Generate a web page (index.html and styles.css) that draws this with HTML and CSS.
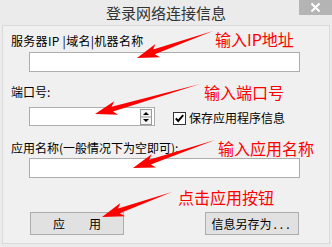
FILE: index.html
```html
<!DOCTYPE html>
<html>
<head>
<meta charset="utf-8">
<link rel="stylesheet" href="styles.css">
</head>
<body>
<div class="window">
  <div class="titlebar">
    <div class="title">登录网络连接信息</div>
    <div class="close">
      <svg width="11" height="11" viewBox="0 0 11 11"><path d="M1.5 1.5 L9.5 9.5 M9.5 1.5 L1.5 9.5" stroke="#fff" stroke-width="2" fill="none"/></svg>
    </div>
  </div>
  <div class="panel">
    <div class="label first">服务器IP |域名|机器名称</div>
    <div class="field wide after-label"></div>
    <div class="label second">端口号:</div>
    <div class="port-row">
      <div class="field port">
        <svg class="spin" width="12" height="16" viewBox="0 0 12 16">
          <rect x="0.5" y="0.5" width="11" height="15" fill="#f4f4f4" stroke="#9a9a9a"/>
          <line x1="1" y1="8" x2="11" y2="8" stroke="#9a9a9a"/>
          <path d="M3 6 L6 3 L9 6 Z" fill="#000"/>
          <path d="M3 10 L6 13 L9 10 Z" fill="#000"/>
        </svg>
      </div>
      <div class="check">
        <svg class="box" width="13" height="13" viewBox="0 0 13 13">
          <rect x="0.5" y="0.5" width="12" height="12" fill="#fff" stroke="#333"/>
          <path d="M2.8 6.4 L5.2 9 L10.2 3.2" stroke="#000" stroke-width="2" fill="none"/>
        </svg>
        <span>保存应用程序信息</span>
      </div>
    </div>
    <div class="label third">应用名称(一般情况下为空即可):</div>
    <div class="field wide after-label3"></div>
    <div class="buttons">
      <div class="btn">应　　用</div>
      <div class="btn">信息另存为<span class="dots">...</span></div>
    </div>
  </div>

  <div class="notes">
    <span class="note n1">输入IP地址</span>
    <span class="note n2">输入端口号</span>
    <span class="note n3">输入应用名称</span>
    <span class="note n4">点击应用按钮</span>
    <svg class="arrows" width="332" height="247" viewBox="0 0 332 247">
      <polygon points="213,31 153.1,49.6 155.4,44.0 137,58 160.0,57.2 154.8,54.3" fill="#f00"/>
      <polygon points="200,84 111.6,106.7 114.2,101.2 95,114 118.1,114.7 113.0,111.5" fill="#f00"/>
      <polygon points="215,140 149.2,159.8 151.6,154.3 133,168 156.1,167.5 150.8,164.6" fill="#f00"/>
      <polygon points="172,192 118.1,208.6 120.4,203.0 102,217 125.1,216.2 119.8,213.3" fill="#f00"/>
    </svg>
  </div>
</div>
</body>
</html>
```

FILE: styles.css
```css
* { box-sizing: border-box; }
html, body { margin: 0; padding: 0; }
body {
  width: 332px;
  height: 247px;
  background: #f0f0f0;
  font-family: "Noto Sans CJK SC", "Liberation Sans", sans-serif;
  color: #000;
  overflow: hidden;
}
.window {
  position: relative;
  width: 332px;
  height: 247px;
  background: #ebebeb;
}
.titlebar {
  height: 25px;
  display: grid;
  grid-template-columns: 33px 1fr 33px;
  align-items: start;
}
.title {
  grid-column: 2;
  text-align: center;
  font-size: 15px;
  line-height: 25px;
  color: #333;
}
.close {
  grid-column: 3;
  height: 15px;
  background: #b4b4b4;
  display: flex;
  align-items: center;
  justify-content: center;
}
.panel {
  margin: 0 2px;
  height: 219px;
  border: 1px solid #dadada;
  background: #f0f0f0;
  display: flex;
  flex-direction: column;
  align-items: flex-start;
}
.label {
  font-size: 12px;
  line-height: 16px;
  height: 16px;
  padding-left: 8px;
  white-space: nowrap;
}
.label.first { margin-top: 7px; letter-spacing: 0.3px; }
.label.second { margin-top: 12px; }
.label.third { margin-top: 14px; }
.field {
  background: #fff;
  border: 1px solid #adadad;
  margin-left: 26px;
}
.field.wide { width: 271px; height: 20px; }
.after-label { margin-top: 3px; }
.after-label3 { margin-top: 2px; }
.port-row {
  margin-top: 7px;
  display: flex;
  align-items: center;
  gap: 18px;
}
.field.port {
  width: 126px;
  height: 19px;
  display: flex;
  justify-content: flex-end;
  align-items: center;
  padding-right: 2px;
}
.check {
  display: flex;
  align-items: center;
  gap: 3px;
  font-size: 12px;
  line-height: 16px;
  margin-top: 3px;
}
.buttons {
  margin-top: 34px;
  margin-left: 27px;
  display: flex;
  gap: 81px;
}
.btn {
  width: 94px;
  height: 23px;
  border: 1px solid #adadad;
  background: #e1e1e1;
  font-size: 12px;
  line-height: 21px;
  text-align: center;
  white-space: nowrap;
}
.dots { letter-spacing: 3px; margin-left: 2px; }
.notes {
  position: absolute;
  left: 0;
  top: 0;
  width: 332px;
  height: 247px;
  pointer-events: none;
}
.arrows { position: absolute; left: 0; top: 0; }
.note {
  position: absolute;
  color: #f00;
  font-size: 16px;
  line-height: 20px;
  white-space: nowrap;
}
.n1 { left: 215px; top: 29px; }
.n2 { left: 204px; top: 82px; }
.n3 { left: 218px; top: 138px; }
.n4 { left: 178px; top: 187px; }
```
